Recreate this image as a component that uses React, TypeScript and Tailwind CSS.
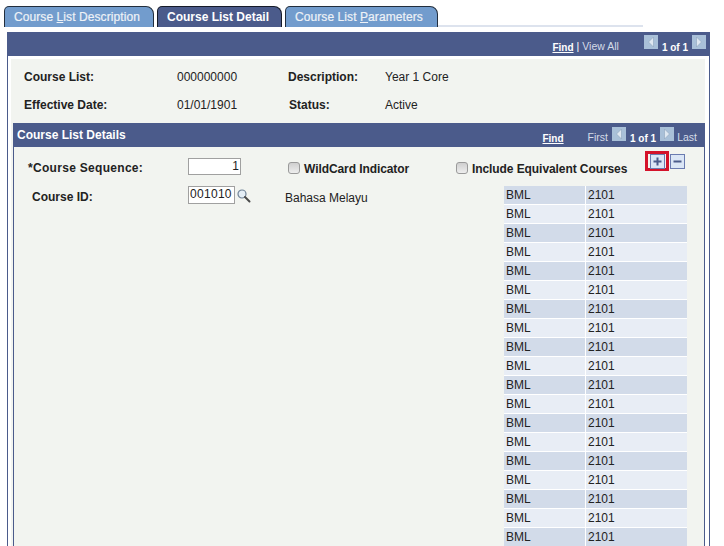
import React from "react";

const F = "font-['Liberation_Sans',Arial,sans-serif]";

function Tab({ active, w, children }: { active?: boolean; w: string; children: React.ReactNode }) {
  return (
    <div
      className={`${w} h-[21px] shrink-0 rounded-tl-[5px] rounded-tr-[8px] border-x border-t border-black/70 flex items-center text-[12px] pb-px pl-[9px] ${
        active ? "bg-[#4b5b8b] font-bold text-white" : "bg-[#729ccd] text-[#eef2f7] tracking-[0.08px] [-webkit-text-stroke:0.2px_#eef2f7]"
      }`}
    >
      <span>{children}</span>
    </div>
  );
}

function Arrow({ dir }: { dir: "l" | "r" }) {
  return (
    <svg width="14" height="14" viewBox="0 0 14 14" className="shrink-0">
      <rect width="14" height="14" fill="#a9c0d8" />
      <path d={dir === "l" ? "M9.5 2v10L4.5 7z" : "M4.5 2v10l5-5z"} fill="#dfe8f1" stroke="#8fa4bc" strokeWidth="0.6" />
    </svg>
  );
}

function Check() {
  return <div className="w-[12px] h-[12px] shrink-0 rounded-[3px] border border-[#9a9a9a] bg-gradient-to-b from-[#cfcfcf] to-[#eeeeee]" />;
}

function Lens() {
  return (
    <svg width="15" height="15" viewBox="0 0 15 15" className="shrink-0">
      <circle cx="6" cy="6" r="4" fill="#e4eef6" stroke="#6f8296" strokeWidth="1.2" />
      <path d="M9 9l4.5 4.5" stroke="#4a4a4a" strokeWidth="2" strokeLinecap="round" />
    </svg>
  );
}

function PlusMinus({ plus }: { plus?: boolean }) {
  return (
    <svg width="15" height="15" viewBox="0 0 15 15" className="shrink-0">
      <rect x="0.5" y="0.5" width="14" height="14" fill="#dbe6f6" stroke="#6a7bb0" />
      <path d={plus ? "M3.5 7.5h8M7.5 3.5v8" : "M3.5 7.5h8"} stroke="#4b5b8b" strokeWidth="2" />
    </svg>
  );
}

export default function App() {
  const rows = Array.from({ length: 19 }, (_, i) => i);
  return (
    <div className={`${F} w-[724px] h-[546px] overflow-hidden bg-white text-[12px] text-[#222]`}>
      {/* Tabs */}
      <div className="pt-[6px] pl-[4px] flex items-end gap-[3px] h-[27px]">
        <Tab w="w-[150px]">Course <span className="underline">L</span>ist Description</Tab>
        <Tab active w="w-[125px]">Course List Detail</Tab>
        <Tab w="w-[153px]">Course List <span className="underline">P</span>arameters</Tab>
        <div className="w-[205px] h-[2px] -ml-[3px] bg-[#dde3ee]" />
      </div>

      {/* Outer box */}
      <div className="ml-[7px] mt-[5px] w-[703px] h-[600px] border-x border-[#4b5b8b]">
        <div className="h-[24px] bg-[#4b5b8b] flex items-center justify-end pr-[3px] text-[10.5px] text-[#d5dce8]">
          <span className="font-bold text-white underline text-[10px] mt-[6px]">Find</span>
          <span className="text-white mx-[3px] mt-[6px]">|</span>
          <span className="mt-[6px]">View All</span>
          <div className="ml-[25px] -mt-[4px]"><Arrow dir="l" /></div>
          <span className="font-bold text-white mx-[4px] mt-[6px] text-[10px]">1 of 1</span>
          <div className="-mt-[4px]"><Arrow dir="r" /></div>
        </div>

        <div className="ml-[3px] mr-[4px] mt-[3px] bg-[#f2f4f0] h-[600px]">
          <div className="h-[64px] pl-[13px] pt-[9px]">
            <div className="flex h-[28px] items-start">
              <span className="w-[153px] font-bold">Course List:</span>
              <span className="w-[111px]">000000000</span>
              <span className="w-[97px] font-bold">Description:</span>
              <span>Year 1 Core</span>
            </div>
            <div className="flex h-[28px] items-start">
              <span className="w-[153px] font-bold">Effective Date:</span>
              <span className="w-[112px]">01/01/1901</span>
              <span className="w-[96px] font-bold">Status:</span>
              <span>Active</span>
            </div>
          </div>

          <div className="ml-[2px] border-r border-l border-[#4b5b8b] h-[500px]">
            <div className="h-[24px] bg-[#4b5b8b] flex items-center pl-[3px] pr-[7px] text-white">
              <span className="font-bold">Course List Details</span>
              <span className="ml-auto font-bold text-[10px] underline mt-[6px]">Find</span>
              <span className="ml-[24px] text-[10.5px] text-[#d5dce8] mt-[6px]">First</span>
              <div className="ml-[4px] -mt-[3px]"><Arrow dir="l" /></div>
              <span className="font-bold text-[10px] mx-[4px] mt-[6px]">1 of 1</span>
              <div className="-mt-[3px]"><Arrow dir="r" /></div>
              <span className="ml-[3px] text-[10.5px] text-[#d5dce8] mt-[6px]">Last</span>
            </div>

            <div className="pt-[8px]">
              <div className="flex items-start h-[29px]">
                <span className="w-[174px] pl-[14px] font-bold mt-[4px] tracking-[0.3px]">*Course Sequence:</span>
                <div className="w-[53px] h-[17px] mt-[3px] bg-white border border-[#a0a0a0] text-right pr-[1px] leading-[14px]">1</div>
                <div className="w-[168px] ml-[47px] mt-[3px] flex items-center gap-[4px]">
                  <Check />
                  <span className="font-bold mt-[2px] tracking-[-0.08px]">WildCard Indicator</span>
                </div>
                <div className="flex items-center gap-[4px] mt-[3px]">
                  <Check />
                  <span className="font-bold mt-[2px] tracking-[-0.08px]">Include Equivalent Courses</span>
                </div>
                <div className="ml-[18px] -mt-[4px] flex items-center gap-[1px]">
                  <div className="border-[3px] border-[#d4122a] w-[24px] h-[20px] flex items-center justify-center">
                    <PlusMinus plus />
                  </div>
                  <PlusMinus />
                </div>
              </div>

              <div className="flex items-start">
                <span className="w-[174px] pl-[18px] font-bold mt-[4px]">Course ID:</span>
                <div className="w-[47px] h-[18px] mt-[2px] bg-white border border-[#a0a0a0] pl-px leading-[15px] tracking-[0.3px]">001010</div>
                <div className="ml-[1px] mt-[4px]"><Lens /></div>
                <span className="ml-[34px] mt-[5px] w-[219px]">Bahasa Melayu</span>
                <div className="w-[183px] mt-[2px] shrink-0">
                  {rows.map((i) => (
                    <div key={i} className={`flex h-[19px] border-b border-white ${i % 2 === 0 ? "bg-[#d2dbe9]" : "bg-[#e8edf5]"}`}>
                      <div className="w-[82px] pl-[2px] leading-[18px] border-r border-white">BML</div>
                      <div className="pl-[2px] leading-[18px]">2101</div>
                    </div>
                  ))}
                </div>
              </div>
            </div>
          </div>
        </div>
      </div>
    </div>
  );
}
